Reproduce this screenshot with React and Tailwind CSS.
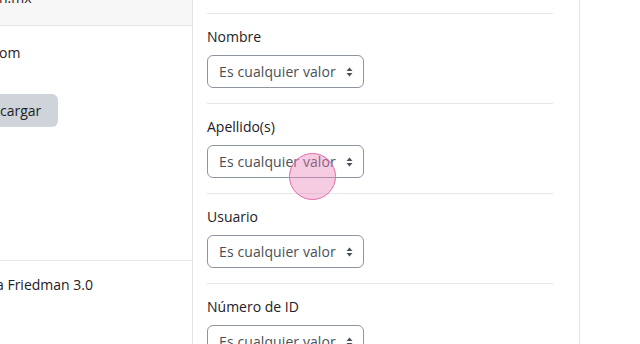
export default function App() {
  const font = { fontFamily: '"Open Sans", "Liberation Sans", sans-serif' };
  const Select = () => (
    <div className="flex h-[33px] w-[157px] items-center justify-between rounded-[6px] border border-[#8f959e] bg-white pl-[11px] pr-[10px] text-[14px] text-[#495057]">
      <span className="tracking-[0.1px]">Es cualquier valor</span>
      <svg width="7" height="10" viewBox="0 0 7 10" className="ml-1">
        <path d="M3.5 0.5 L6.5 4 H0.5 Z" fill="#495057" />
        <path d="M3.5 9.5 L6.5 6 H0.5 Z" fill="#495057" />
      </svg>
    </div>
  );
  const Section = ({ label }) => (
    <div className="border-t border-[#e6e6e6] pt-[13px] pb-[15px]">
      <div className="mb-[8px] h-[20px] text-[14px] leading-[20px] text-[#1d2125]">{label}</div>
      <Select />
    </div>
  );
  return (
    <div className="flex h-[344px] w-[640px] overflow-hidden bg-white" style={font}>
      <div className="flex w-[193px] shrink-0 flex-col overflow-hidden border-r border-[#e3e3e3] text-[14px] text-[#1d2125]">
        <div className="h-[26px] shrink-0 border-b border-[#e6e6e6] bg-[#f7f7f7]">
          <div className="-mt-[12px] -ml-[1px] leading-[20px]">n.mx</div>
        </div>
        <div className="h-[235px] shrink-0 border-b border-[#e6e6e6]">
          <div className="mt-[17px] -ml-[1px] leading-[20px]">om</div>
          <div className="mt-[31px] -ml-[8px] flex h-[33px] w-[66px] items-center rounded-[6px] bg-[#ced4da] pl-[8px] leading-[20px]">
            cargar
          </div>
        </div>
        <div className="mt-[14px] -ml-[4px] leading-[20px]">a Friedman 3.0</div>
      </div>
      <div className="relative w-[387px] shrink-0 border-r border-[#e3e3e3] pl-[14px] pr-[26px] pt-[13px]">
        <Section label="Nombre" />
        <Section label="Apellido(s)" />
        <Section label="Usuario" />
        <Section label="Número de ID" />
        <div className="absolute left-[96px] top-[153px] h-[47px] w-[47px] rounded-full border border-[#e36aa8] bg-[#e880b8]/40" />
      </div>
      <div className="flex-1" />
    </div>
  );
}
